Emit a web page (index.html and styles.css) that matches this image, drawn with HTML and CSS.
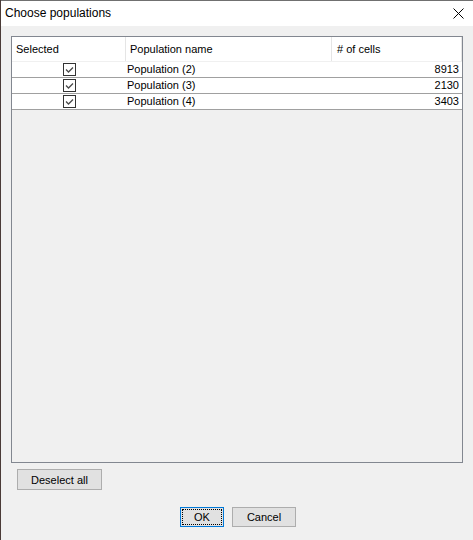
FILE: index.html
```html
<!DOCTYPE html>
<html>
<head>
<meta charset="utf-8">
<link rel="stylesheet" href="styles.css">
</head>
<body>
<div class="window">
  <div class="titlebar">
    <span class="title">Choose populations</span>
    <svg class="close" width="11" height="11" viewBox="0 0 11 11"><path d="M0.5 0.5 L10.5 10.5 M10.5 0.5 L0.5 10.5" stroke="#000" stroke-width="1" fill="none"/></svg>
  </div>
  <div class="content">
    <div class="table">
      <div class="header">
        <div class="hcell c1">Selected</div>
        <div class="hcell c2">Population name</div>
        <div class="hcell c3">of cells</div>
      </div>
      <div class="row">
        <div class="cell c1"><svg class="cb" width="13" height="13" viewBox="0 0 13 13"><rect x="0.5" y="0.5" width="12" height="12" fill="#fff" stroke="#333"/><path d="M3 6.5 L5.5 9 L10 4.5" stroke="#4a4a4a" stroke-width="1.3" fill="none"/></svg></div>
        <div class="cell c2">Population (2)</div>
        <div class="cell c3 num">8913</div>
      </div>
      <div class="row">
        <div class="cell c1"><svg class="cb" width="13" height="13" viewBox="0 0 13 13"><rect x="0.5" y="0.5" width="12" height="12" fill="#fff" stroke="#333"/><path d="M3 6.5 L5.5 9 L10 4.5" stroke="#4a4a4a" stroke-width="1.3" fill="none"/></svg></div>
        <div class="cell c2">Population (3)</div>
        <div class="cell c3 num">2130</div>
      </div>
      <div class="row">
        <div class="cell c1"><svg class="cb" width="13" height="13" viewBox="0 0 13 13"><rect x="0.5" y="0.5" width="12" height="12" fill="#fff" stroke="#333"/><path d="M3 6.5 L5.5 9 L10 4.5" stroke="#4a4a4a" stroke-width="1.3" fill="none"/></svg></div>
        <div class="cell c2">Population (4)</div>
        <div class="cell c3 num">3403</div>
      </div>
    </div>
    <div class="actions-left">
      <button class="btn deselect">Deselect all</button>
    </div>
    <div class="actions">
      <button class="btn ok"><span class="focus">OK</span></button>
      <button class="btn cancel">Cancel</button>
    </div>
  </div>
</div>
</body>
</html>
```

FILE: styles.css
```css
html, body {
  margin: 0;
  padding: 0;
  background: #f0f0f0;
}
.window {
  width: 473px;
  height: 540px;
  box-sizing: border-box;
  border-left: 1px solid #4a3b37;
  background: #f0f0f0;
  font-family: "Liberation Sans", Arial, sans-serif;
  font-size: 11px;
  color: #000;
  display: flex;
  flex-direction: column;
  overflow: hidden;
}
.titlebar {
  height: 26px;
  box-sizing: border-box;
  border-top: 1px solid #707070;
  background: #fff;
  display: flex;
  align-items: center;
  justify-content: space-between;
  padding: 0 9px 0 4px;
}
.title {
  font-size: 12px;
  line-height: 25px;
}
.close {
  display: block;
  margin-top: -1px;
}
.content {
  display: flex;
  flex-direction: column;
  padding: 10px 10px 0 10px;
}
.table {
  height: 427px;
  box-sizing: border-box;
  border: 1px solid #828790;
  background: #f0f0f0;
  display: flex;
  flex-direction: column;
}
.header {
  display: flex;
  height: 25px;
  box-sizing: border-box;
  background: #fff;
  border-bottom: 1px solid #f0f0f0;
}
.hcell {
  box-sizing: border-box;
  line-height: 25px;
  padding-left: 4px;
  border-right: 1px solid #e5e5e5;
}
.hcell.c3::before {
  content: "# ";
}
.c1 { width: 114px; }
.c2 { width: 206px; }
.c3 { width: 130px; }
.header .c3 { padding-left: 5px; }
.row {
  display: flex;
  height: 16px;
  box-sizing: border-box;
  background: #fff;
  border-bottom: 1px solid #a0a0a0;
}
.cell {
  box-sizing: border-box;
  line-height: 15px;
}
.cell.c1 {
  display: flex;
  justify-content: center;
  align-items: center;
  padding-left: 1px;
}
.cell.c2 {
  padding-left: 1px;
}
.cell.num {
  text-align: right;
  padding-right: 3px;
}
.cb {
  display: block;
}
.btn {
  font-family: "Liberation Sans", Arial, sans-serif;
  font-size: 11px;
  color: #000;
  background: #e1e1e1;
  border: 1px solid #adadad;
  border-radius: 0;
  padding: 0;
  margin: 0;
  box-sizing: border-box;
}
.actions-left {
  display: flex;
  padding-left: 6px;
  margin-top: 6px;
}
.deselect {
  width: 85px;
  height: 21px;
}
.actions {
  display: flex;
  justify-content: center;
  gap: 8px;
  margin-top: 17px;
  padding-left: 2px;
}
.ok {
  width: 44px;
  height: 20px;
  border: 1px solid #0078d7;
  padding: 1px;
  display: flex;
}
.focus {
  flex: 1;
  border: 1px dotted #000;
  line-height: 14px;
  text-align: center;
}
.cancel {
  width: 64px;
  height: 20px;
}
```
